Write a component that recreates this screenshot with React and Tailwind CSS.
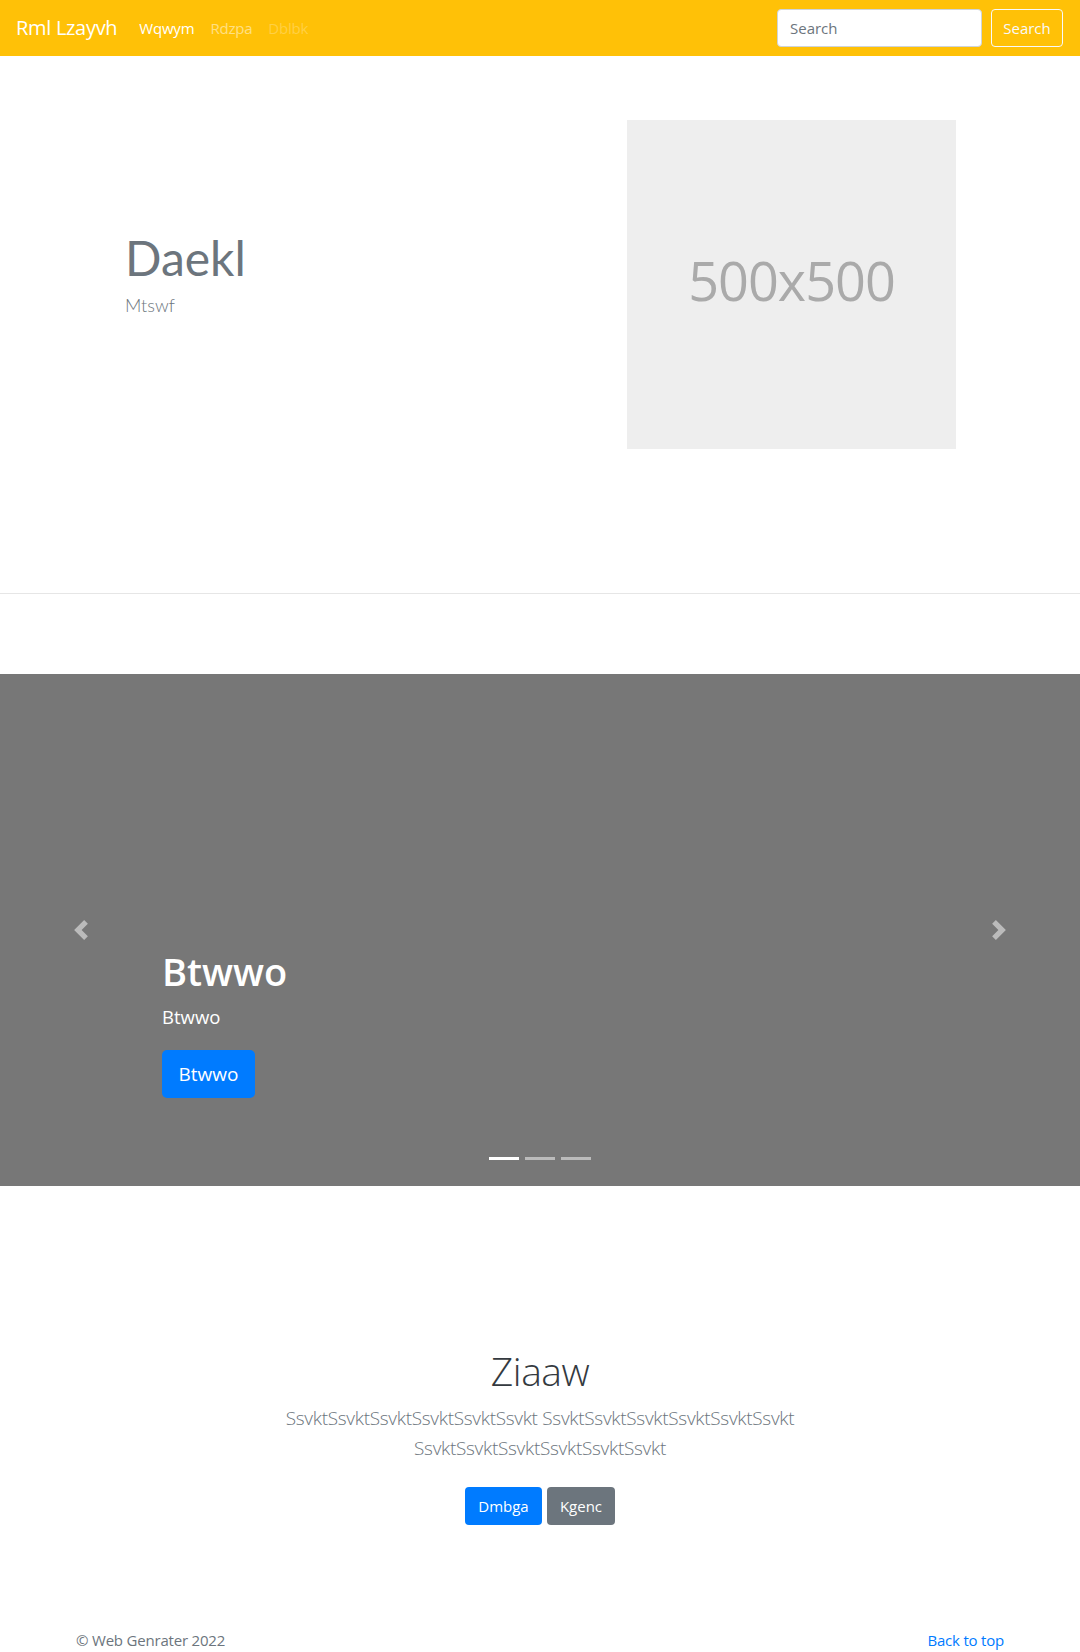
import React from 'react';

const sans = "font-['Open_Sans',sans-serif]";

function Chevron({ dir }) {
  const d = dir === 'prev'
    ? 'M5.25 0l-4 4 4 4 1.5-1.5L4.25 4l2.5-2.5L5.25 0z'
    : 'M2.75 0l-1.5 1.5L3.75 4l-2.5 2.5L2.75 8l4-4-4-4z';
  return (
    <svg viewBox="0 0 8 8" className="w-5 h-5 opacity-50" fill="#fff">
      <path d={d} />
    </svg>
  );
}

export default function App() {
  return (
    <div className={`${sans} bg-white text-[#212529] min-h-[1652px]`}>
      {/* ── Navbar ─────────────────────────── */}
      <nav className="h-[56px] bg-[#ffc107] flex items-center pl-4 pr-[17px]">
        <span className="text-[20px] leading-[30px] text-white mr-[22px] tracking-[-0.3px]">Rml Lzayvh</span>
        <div className="flex items-center text-[15px] tracking-[-0.2px]">
          <span className="text-white pr-4">Wqwym</span>
          <span className="text-white/50 pr-4">Rdzpa</span>
          <span className="text-white/25">Dblbk</span>
        </div>
        <div className="ml-auto flex items-center gap-[9px]">
          <div className="w-[205px] h-[38px] bg-white border border-[#ced4da] rounded flex items-center px-3 text-[15px] text-[#6c757d]">
            Search
          </div>
          <button className="h-[38px] w-[72px] border border-[#f8f9fa] rounded text-[#f8f9fa] text-[15px]">
            Search
          </button>
        </div>
      </nav>

      {/* ── Hero ───────────────────────────── */}
      <section className="flex items-center pl-[125px] pr-[124px] pt-[64px] pb-[144px]">
        <div className="flex-1 font-['Lato',sans-serif] text-[#6c757d] pb-[21px]">
          <h1 className="text-[48px] leading-[1.2] mb-[4px]">Daekl</h1>
          <p className="text-[18px] leading-[28px] font-light">Mtswf</p>
        </div>
        <div className="w-[329px] h-[329px] bg-[#eeeeee] flex items-center justify-center pb-[8px]">
          <span className="text-[54px] text-[#aaaaaa] tracking-[-1px]">500x500</span>
        </div>
      </section>

      <hr className="border-0 border-t border-[#e6e6e6] mb-[80px]" />

      {/* ── Carousel ───────────────────────── */}
      <section className="h-[512px] bg-[#777777] flex relative">
        <div className="w-[162px] flex items-center justify-center">
          <Chevron dir="prev" />
        </div>
        <div className="flex-1 flex flex-col justify-end pb-[88px] text-white">
          <h2 className="text-[38px] leading-[48px] font-semibold mb-[9px]">Btwwo</h2>
          <p className="text-[18.5px] leading-[26px] mb-[20px]">Btwwo</p>
          <div>
            <button className="h-[48px] w-[93px] bg-[#007bff] rounded-[5px] text-[19px] text-white">Btwwo</button>
          </div>
        </div>
        <div className="w-[162px] flex items-center justify-center">
          <Chevron dir="next" />
        </div>
        <div className="absolute left-0 right-0 bottom-[26px] flex justify-center gap-[6px]">
          <span className="w-[30px] h-[3px] bg-white" />
          <span className="w-[30px] h-[3px] bg-white/50" />
          <span className="w-[30px] h-[3px] bg-white/50" />
        </div>
      </section>

      {/* ── Jumbotron ──────────────────────── */}
      <section className="pt-[161px] pb-[103px] text-center">
        <h1 className="text-[39px] leading-[48px] font-light text-[#343a40] mb-[8px] tracking-[-0.5px]">Ziaaw</h1>
        <p className="mx-auto w-[610px] text-[19px] leading-[30px] font-light text-[#6c757d] mb-[24px] tracking-[-0.3px]">
          SsvktSsvktSsvktSsvktSsvktSsvkt SsvktSsvktSsvktSsvktSsvktSsvkt SsvktSsvktSsvktSsvktSsvktSsvkt
        </p>
        <div className="flex justify-center gap-[5px]">
          <button className="h-[38px] w-[77px] bg-[#007bff] rounded text-white text-[15px]">Dmbga</button>
          <button className="h-[38px] w-[68px] bg-[#6c757d] rounded text-white text-[15px]">Kgenc</button>
        </div>
      </section>

      {/* ── Footer ─────────────────────────── */}
      <footer className="flex justify-between pl-[76px] pr-[76px] text-[15px] leading-[24px] text-[#6c757d] tracking-[-0.2px]">
        <span>© Web Genrater 2022</span>
        <span className="text-[#007bff]">Back to top</span>
      </footer>
    </div>
  );
}
